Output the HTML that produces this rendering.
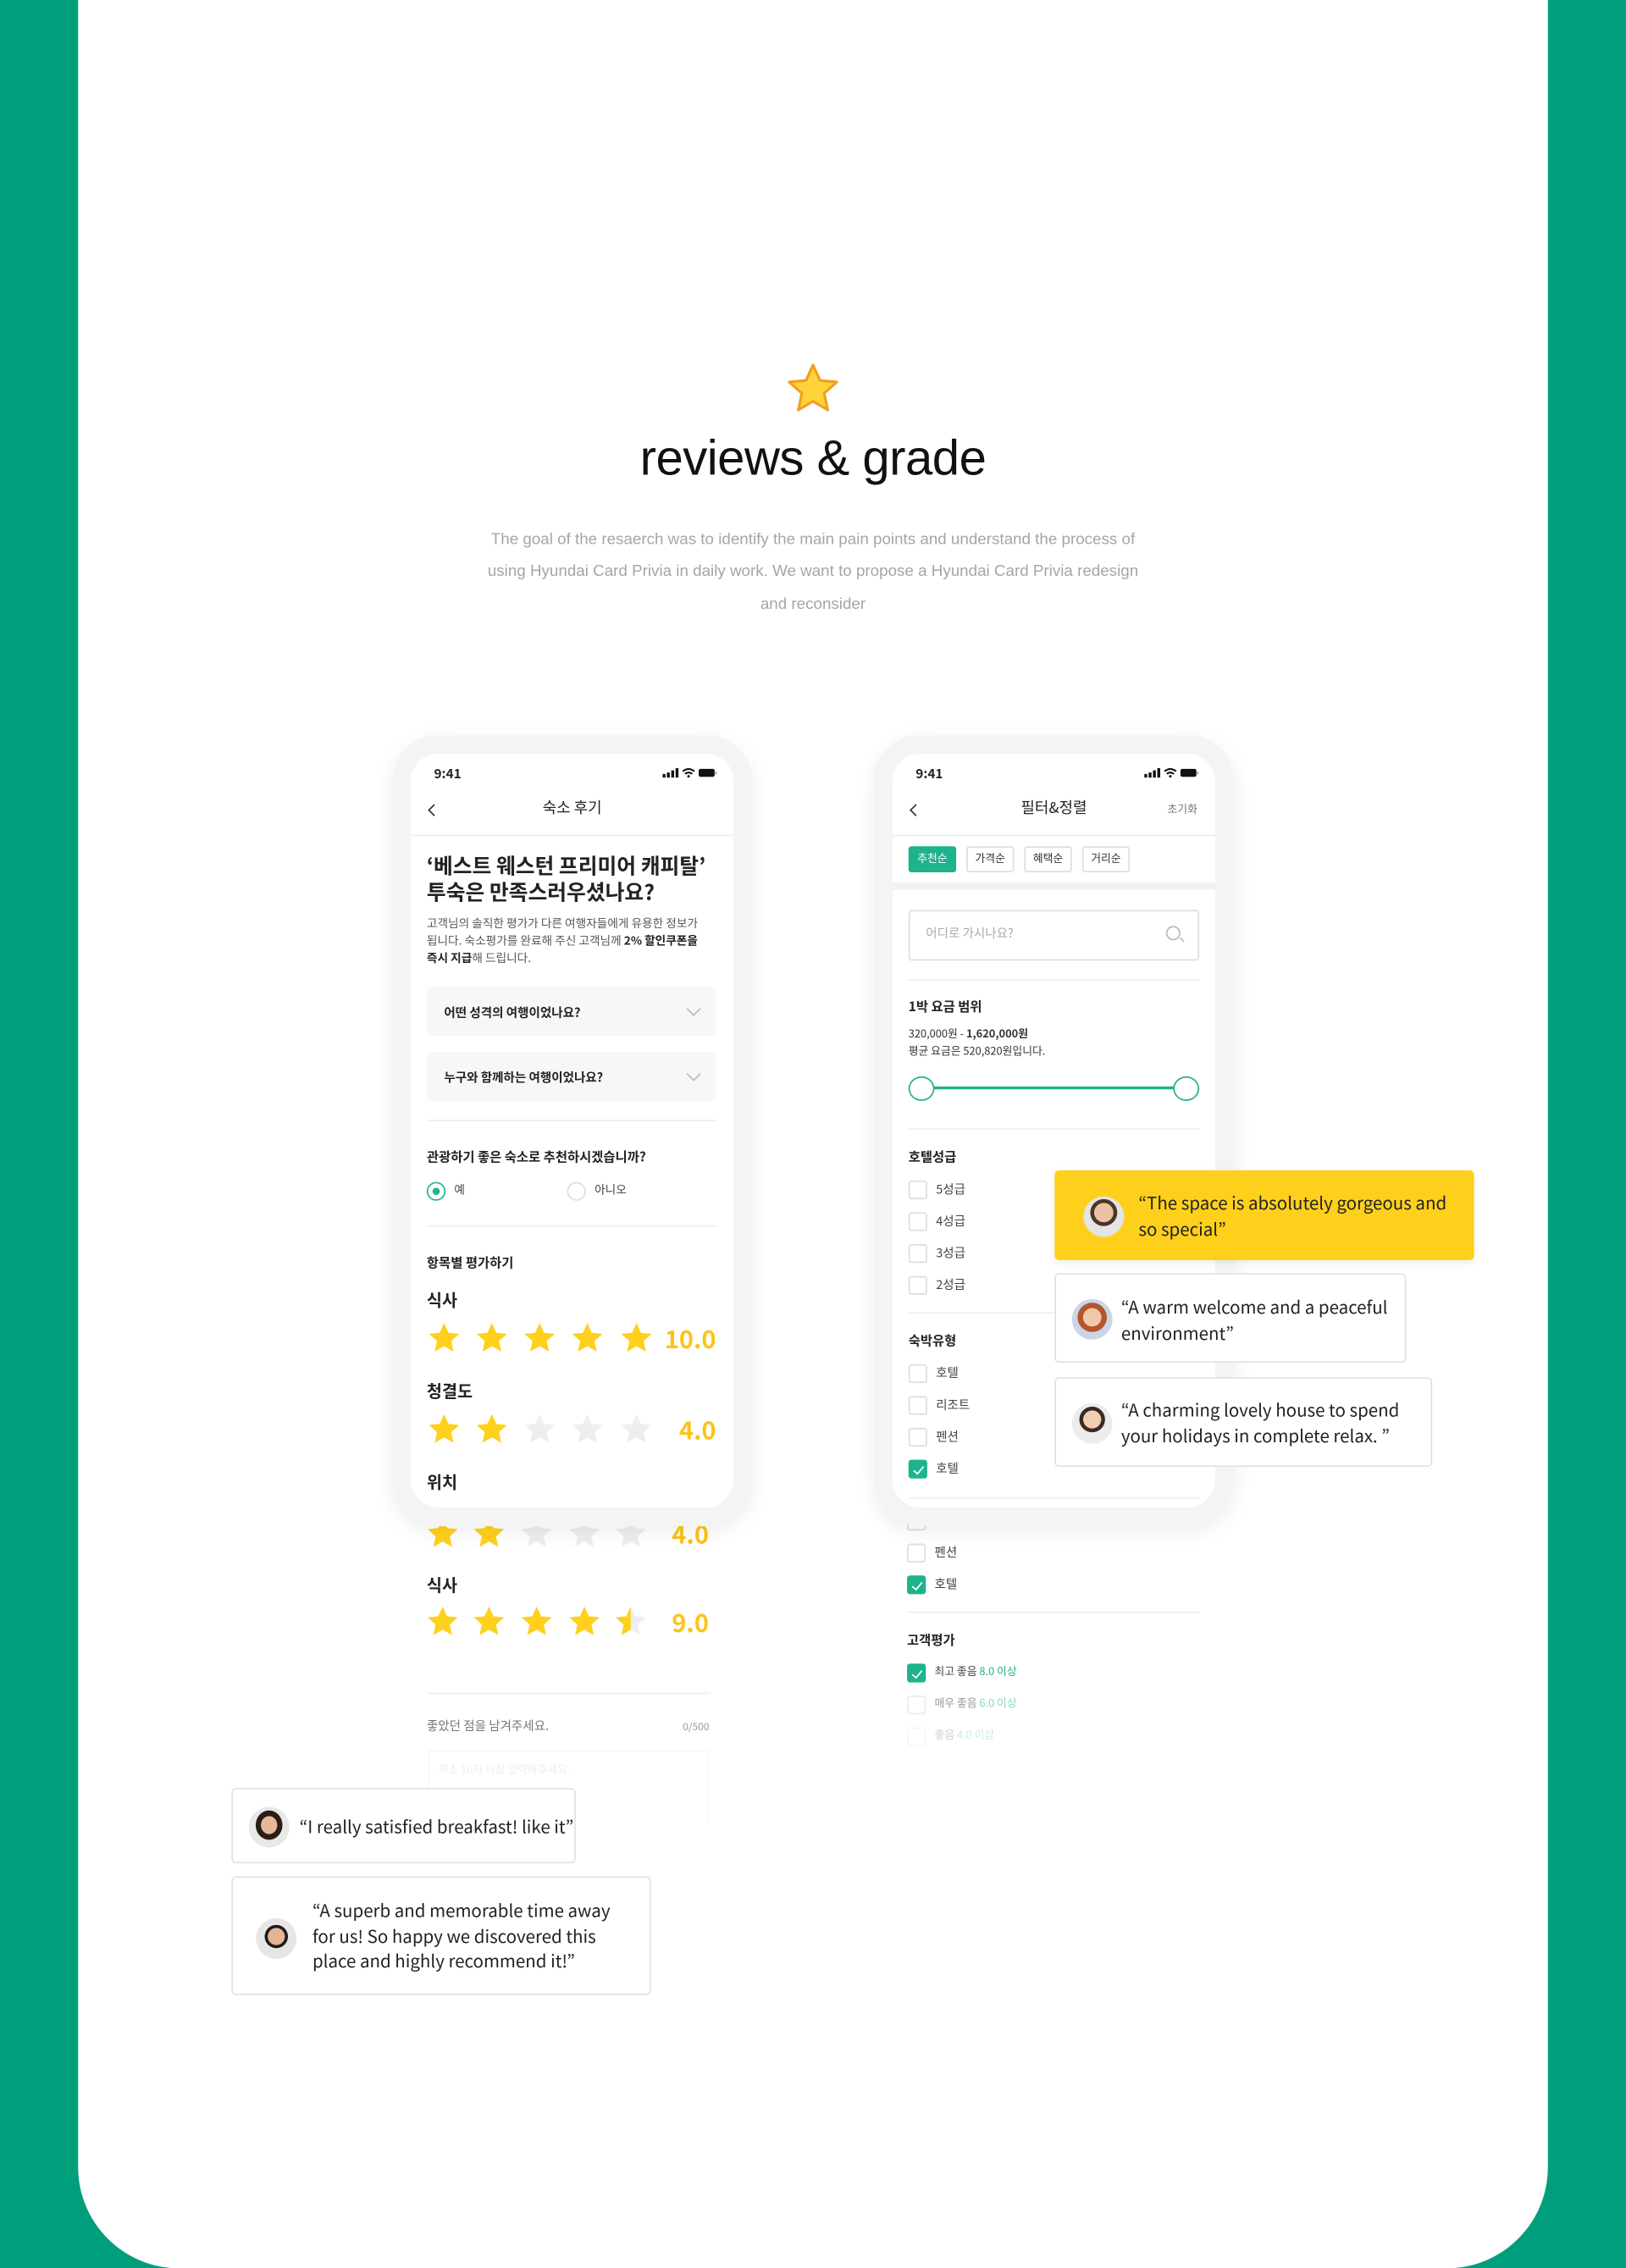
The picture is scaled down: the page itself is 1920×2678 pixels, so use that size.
<!DOCTYPE html>
<html><head><meta charset="utf-8">
<style>
*{margin:0;padding:0;box-sizing:border-box}
html,body{width:1920px;height:2678px;overflow:hidden;background:#009e7b}
#s{position:absolute;left:0;top:0;width:1124px;height:1568px;transform:scale(1.70819);transform-origin:0 0;font-family:"Noto Sans CJK KR","Liberation Sans",sans-serif;color:#222}
.a{position:absolute}
.panel{left:54px;top:0;width:1016px;height:1568px;background:#fff;border-radius:0 0 70px 70px}
.t{white-space:nowrap;line-height:1}
.frame{border:13px solid #f4f4f4;border-radius:32px;box-shadow:0 4px 14px rgba(0,0,0,.07)}
.div{height:1px;background:#eee}
.dd{background:#f7f7f7;border-radius:3px;height:34px}
.dd span{position:absolute;left:12px;top:12px;font-size:8.5px;font-weight:700}
.dd i{position:absolute;right:12px;top:12px;width:7px;height:7px;border-right:1px solid #bbb;border-bottom:1px solid #bbb;transform:rotate(45deg)}
.cb{width:13px;height:13px;border:1px solid #ddd;border-radius:2px;background:#fff}
.cb.on{background:#1fb38d;border-color:#1fb38d}
.cb.on:after{content:"";position:absolute;left:3.5px;top:1.5px;width:3px;height:6px;border-right:1.5px solid #fff;border-bottom:1.5px solid #fff;transform:rotate(40deg)}
.lbl{font-size:8.5px;color:#444}
.chip{height:18px;border:1px solid #ddd;border-radius:2px;font-size:7.5px;text-align:center;line-height:16px;color:#333;width:33px}
.card{background:#fff;border:1px solid #e2e2e2;border-radius:3px}
.card p{position:absolute;font-size:12px;line-height:17.5px;color:#222;font-family:"Noto Sans CJK KR",sans-serif}
.av{width:28px;height:28px;border-radius:50%;background:radial-gradient(circle at 50% 40%,#e9c3a4 0 30%,#4a3529 31% 42%,#e4e4e4 43%);overflow:hidden}
</style></head><body>
<div id="s">
<div class="a panel"></div>

<svg class="a" style="left:543px;top:250px" width="38" height="36" viewBox="0 0 24 23"><polygon points="12,1.5 15.1,8.3 22.5,9 16.9,14 18.5,21.3 12,17.5 5.5,21.3 7.1,14 1.5,9 8.9,8.3" fill="#ffd43a" stroke="#f0a020" stroke-width="1.2" stroke-linejoin="round"/></svg>
<div class="a t" style="left:0;width:1124px;text-align:center;top:300px;font-size:34px;font-family:'Liberation Sans',sans-serif;color:#111;letter-spacing:-.3px">reviews &amp; grade</div>
<div class="a" style="left:327px;width:470px;top:362px;text-align:center;font-size:11px;line-height:22.3px;color:#a5a5a5;font-family:'Liberation Sans',sans-serif">The goal of the resaerch was to identify the main pain points and understand the process of using Hyundai Card Privia in daily work. We want to propose a Hyundai Card Privia redesign and reconsider</div>

<svg width="0" height="0" style="position:absolute"><defs>
<g id="sb"><rect x="0" y="5" width="2" height="2.5" fill="#111"/><rect x="3" y="4" width="2" height="3.5" fill="#111"/><rect x="6" y="2.5" width="2" height="5" fill="#111"/><rect x="9" y="1" width="2" height="6.5" fill="#111"/>
<path d="M14 3.2 Q18 0 22 3.2 M15.5 5 Q18 3 20.5 5" stroke="#111" stroke-width="1.2" fill="none"/><circle cx="18" cy="6.6" r=".9" fill="#111"/>
<rect x="25" y="1.5" width="11" height="5.5" rx="1.3" fill="#111"/><rect x="36.5" y="3.3" width="1" height="2" fill="#999"/></g>
</defs></svg>

<!-- PHONE 1 content -->
<div class="a" style="left:284px;top:521px;width:223px;height:521px;background:#fff;border-radius:22px"></div>
<div class="a t" style="left:300px;top:530px;font-size:9px;font-weight:700">9:41</div>
<svg class="a" style="left:458px;top:530px" width="40" height="9"><use href="#sb"/></svg>
<div class="a" style="left:297px;top:557px;width:6px;height:6px;border-left:1.3px solid #333;border-bottom:1.3px solid #333;transform:rotate(45deg)"></div>
<div class="a t" style="left:284px;width:223px;text-align:center;top:554px;font-size:10.5px">숙소 후기</div>
<div class="a div" style="left:284px;top:577px;width:223px"></div>
<div class="a" style="left:295px;top:590px;font-size:14.5px;font-weight:700;line-height:18px;white-space:nowrap">‘베스트 웨스턴 프리미어 캐피탈’<br>투숙은 만족스러우셨나요?</div>
<div class="a" style="left:295px;top:633px;font-size:8px;line-height:12px;color:#555;white-space:nowrap">고객님의 솔직한 평가가 다른 여행자들에게 유용한 정보가<br>됩니다. 숙소평가를 완료해 주신 고객님께 <b style="color:#222">2% 할인쿠폰을</b><br><b style="color:#222">즉시 지급</b>해 드립니다.</div>
<div class="a dd" style="left:295px;top:682px;width:200px"><span>어떤 성격의 여행이었나요?</span><i></i></div>
<div class="a dd" style="left:295px;top:727px;width:200px"><span>누구와 함께하는 여행이었나요?</span><i></i></div>
<div class="a div" style="left:295px;top:774px;width:200px"></div>
<div class="a t" style="left:295px;top:795px;font-size:9px;font-weight:700">관광하기 좋은 숙소로 추천하시겠습니까?</div>
<div class="a" style="left:295px;top:817px;width:13px;height:13px;border-radius:50%;border:1.5px solid #1fb38d"><div class="a" style="left:2.5px;top:2.5px;width:5px;height:5px;border-radius:50%;background:#1fb38d"></div></div>
<div class="a t lbl" style="left:314px;top:819px;font-size:8px">예</div>
<div class="a" style="left:392px;top:817px;width:13px;height:13px;border-radius:50%;border:1px solid #ddd"></div>
<div class="a t lbl" style="left:411px;top:819px;font-size:8px">아니오</div>
<div class="a div" style="left:295px;top:847px;width:200px"></div>
<div class="a t" style="left:295px;top:868px;font-size:9px;font-weight:700">항목별 평가하기</div>

<div class="a t" style="left:295px;top:894px;font-size:11.5px;font-weight:700">식사</div>
<div class="a t" style="left:295px;top:957px;font-size:11.5px;font-weight:700">청결도</div>
<div class="a t" style="left:295px;top:1020px;font-size:11.5px;font-weight:700">위치</div>
<div class="a t" style="left:295px;top:1091px;font-size:11.5px;font-weight:700">식사</div>
<div class="a t" style="left:440px;width:55px;text-align:right;top:916px;font-size:17px;font-weight:700;color:#fcc419">10.0</div>
<div class="a t" style="left:440px;width:55px;text-align:right;top:979px;font-size:17px;font-weight:700;color:#fcc419">4.0</div>
<div class="a t" style="left:435px;width:55px;text-align:right;top:1051px;font-size:17px;font-weight:700;color:#fcc419">4.0</div>
<div class="a t" style="left:435px;width:55px;text-align:right;top:1112px;font-size:17px;font-weight:700;color:#fcc419">9.0</div>
<svg class="a" style="left:0;top:0" width="1124" height="1300">
<defs><polygon id="st" points="12,1.5 15.1,8.3 22.5,9 16.9,14 18.5,21.3 12,17.5 5.5,21.3 7.1,14 1.5,9 8.9,8.3"/>
<clipPath id="hc"><rect x="0" y="0" width="12" height="24"/></clipPath></defs>
<g fill="#ffd01c">
<use href="#st" transform="translate(295,913)"/><use href="#st" transform="translate(328,913)"/><use href="#st" transform="translate(361,913)"/><use href="#st" transform="translate(394,913)"/><use href="#st" transform="translate(428,913)"/>
<use href="#st" transform="translate(295,976)"/><use href="#st" transform="translate(328,976)"/>
<use href="#st" transform="translate(294,1048)"/><use href="#st" transform="translate(326,1048)"/>
<use href="#st" transform="translate(294,1109)"/><use href="#st" transform="translate(326,1109)"/><use href="#st" transform="translate(359,1109)"/><use href="#st" transform="translate(392,1109)"/>
</g>
<g fill="#eeeeee">
<use href="#st" transform="translate(361,976)"/><use href="#st" transform="translate(394,976)"/><use href="#st" transform="translate(428,976)"/>
<use href="#st" transform="translate(359,1048)"/><use href="#st" transform="translate(392,1048)"/><use href="#st" transform="translate(424,1048)"/>
<use href="#st" transform="translate(424,1109)"/>
</g>
<g transform="translate(424,1109)"><use href="#st" fill="#ffd01c" clip-path="url(#hc)"/></g>
</svg>
<div class="a div" style="left:295px;top:1170px;width:196px"></div>
<div class="a t" style="left:295px;top:1189px;font-size:8.5px;color:#777">좋았던 점을 남겨주세요.</div>
<div class="a t" style="left:472px;top:1191px;font-size:7px;color:#999">0/500</div>
<div class="a" style="left:296px;top:1210px;width:194px;height:50px;border:1px solid #f7f7f7;border-bottom:none"></div>
<div class="a t" style="left:303px;top:1220px;font-size:7.5px;color:#eee">최소 10자 이상 입력해주세요.</div>

<div class="a frame" style="left:271px;top:508px;width:249px;height:547px"></div>

<!-- PHONE 2 content -->
<div class="a" style="left:617px;top:521px;width:223px;height:521px;background:#fff;border-radius:22px;overflow:hidden">
 <div class="a" style="left:0;top:89px;width:223px;height:5px;background:#f2f2f2"></div>
</div>
<div class="a t" style="left:633px;top:530px;font-size:9px;font-weight:700">9:41</div>
<svg class="a" style="left:791px;top:530px" width="40" height="9"><use href="#sb"/></svg>
<div class="a" style="left:630px;top:557px;width:6px;height:6px;border-left:1.3px solid #333;border-bottom:1.3px solid #333;transform:rotate(45deg)"></div>
<div class="a t" style="left:617px;width:223px;text-align:center;top:554px;font-size:10.5px">필터&amp;정렬</div>
<div class="a t" style="left:807px;top:556px;font-size:7.5px;color:#777">초기화</div>
<div class="a div" style="left:617px;top:577px;width:223px"></div>
<div class="a chip" style="left:628px;top:585px;background:#1fb38d;border-color:#1fb38d;color:#fff">추천순</div>
<div class="a chip" style="left:668px;top:585px">가격순</div>
<div class="a chip" style="left:708px;top:585px">혜택순</div>
<div class="a chip" style="left:748px;top:585px">거리순</div>
<div class="a" style="left:628px;top:629px;width:201px;height:35px;border:1px solid #ddd;border-radius:2px"></div>
<div class="a t" style="left:640px;top:641px;font-size:8.5px;color:#aaa">어디로 가시나요?</div>
<div class="a" style="left:806px;top:640px;width:10px;height:10px;border:1px solid #bbb;border-radius:50%"></div>
<div class="a" style="left:815px;top:649px;width:4px;height:1px;background:#bbb;transform:rotate(45deg)"></div>
<div class="a div" style="left:628px;top:677px;width:201px"></div>
<div class="a t" style="left:628px;top:691px;font-size:9px;font-weight:700">1박 요금 범위</div>
<div class="a t" style="left:628px;top:711px;font-size:7.5px;color:#333">320,000원 - <b>1,620,000원</b></div>
<div class="a t" style="left:628px;top:723px;font-size:7.5px;color:#333">평균 요금은 520,820원입니다.</div>
<div class="a" style="left:640px;top:751px;width:176px;height:2px;background:#1fb38d"></div>
<div class="a" style="left:628px;top:744px;width:18px;height:17px;border-radius:50%;border:1px solid #1fb38d;background:#fff"></div>
<div class="a" style="left:811px;top:744px;width:18px;height:17px;border-radius:50%;border:1px solid #1fb38d;background:#fff"></div>
<div class="a div" style="left:628px;top:780px;width:201px"></div>
<div class="a t" style="left:628px;top:795px;font-size:9px;font-weight:700">호텔성급</div>
<div class="a cb" style="left:628px;top:816px"></div><div class="a t lbl" style="left:647px;top:818px">5성급</div>
<div class="a cb" style="left:628px;top:838px"></div><div class="a t lbl" style="left:647px;top:840px">4성급</div>
<div class="a cb" style="left:628px;top:860px"></div><div class="a t lbl" style="left:647px;top:862px">3성급</div>
<div class="a cb" style="left:628px;top:882px"></div><div class="a t lbl" style="left:647px;top:884px">2성급</div>
<div class="a div" style="left:628px;top:907px;width:201px"></div>
<div class="a t" style="left:628px;top:922px;font-size:9px;font-weight:700">숙박유형</div>
<div class="a cb" style="left:628px;top:943px"></div><div class="a t lbl" style="left:647px;top:945px">호텔</div>
<div class="a cb" style="left:628px;top:965px"></div><div class="a t lbl" style="left:647px;top:967px">리조트</div>
<div class="a cb" style="left:628px;top:987px"></div><div class="a t lbl" style="left:647px;top:989px">펜션</div>
<div class="a cb on" style="left:628px;top:1009px"></div><div class="a t lbl" style="left:647px;top:1011px">호텔</div>
<div class="a div" style="left:628px;top:1035px;width:201px"></div>
<div class="a cb" style="left:627px;top:1045px"></div>
<div class="a cb" style="left:627px;top:1067px"></div><div class="a t lbl" style="left:646px;top:1069px">펜션</div>
<div class="a cb on" style="left:627px;top:1089px"></div><div class="a t lbl" style="left:646px;top:1091px">호텔</div>
<div class="a div" style="left:627px;top:1114px;width:202px"></div>
<div class="a t" style="left:627px;top:1129px;font-size:9px;font-weight:700">고객평가</div>
<div class="a cb on" style="left:627px;top:1150px"></div><div class="a t lbl" style="left:646px;top:1152px;font-size:7.5px">최고 좋음 <span style="color:#1fb38d">8.0 이상</span></div>
<div style="opacity:.55"><div class="a cb" style="left:627px;top:1172px"></div><div class="a t lbl" style="left:646px;top:1174px;font-size:7.5px">매우 좋음 <span style="color:#1fb38d">6.0 이상</span></div></div>
<div style="opacity:.25"><div class="a cb" style="left:627px;top:1194px"></div><div class="a t lbl" style="left:646px;top:1196px;font-size:7.5px">좋음 <span style="color:#1fb38d">4.0 이상</span></div></div>

<div class="a frame" style="left:604px;top:508px;width:249px;height:547px"></div>

<!-- Cards -->
<div class="a" style="left:729px;top:809px;width:290px;height:62px;background:#fed01b;border-radius:3px;box-shadow:0 2px 6px rgba(0,0,0,.08)">
 <div class="a av" style="left:20px;top:18px"></div>
 <p class="a" style="left:58px;top:14px;font-size:12px;line-height:17.5px;white-space:nowrap">“The space is absolutely gorgeous and<br>so special”</p>
</div>
<div class="a card" style="left:729px;top:880px;width:243px;height:62px">
 <div class="a av" style="left:11px;top:17px;background:radial-gradient(circle at 50% 45%,#f0c9ac 0 30%,#b5552e 31% 48%,#c9d6e6 49%)"></div>
 <p style="left:45px;top:14px;white-space:nowrap">“A warm welcome and a peaceful<br>environment”</p>
</div>
<div class="a card" style="left:729px;top:952px;width:261px;height:62px">
 <div class="a av" style="left:11px;top:17px;background:radial-gradient(circle at 50% 40%,#f1cdb2 0 28%,#3b2a20 29% 40%,#ececec 41%)"></div>
 <p style="left:45px;top:13px;white-space:nowrap">“A charming lovely house to spend<br>your holidays in complete relax. ”</p>
</div>
<div class="a card" style="left:160px;top:1236px;width:238px;height:52px">
 <div class="a av" style="left:11px;top:12px;background:radial-gradient(ellipse at 50% 45%,#e6b898 0 28%,#2a1d17 29% 46%,#e8e8e8 47%)"></div>
 <p style="left:46px;top:17px;white-space:nowrap">“I really satisfied breakfast! like it”</p>
</div>
<div class="a card" style="left:160px;top:1297px;width:290px;height:82px">
 <div class="a av" style="left:16px;top:28px;background:radial-gradient(circle at 50% 45%,#e2b594 0 28%,#1e1a18 29% 38%,#e6e6e6 39%)"></div>
 <p style="left:55px;top:14px;white-space:nowrap">“A superb and memorable time away<br>for us! So happy we discovered this<br>place and highly recommend it!”</p>
</div>
</div>
</body></html>
